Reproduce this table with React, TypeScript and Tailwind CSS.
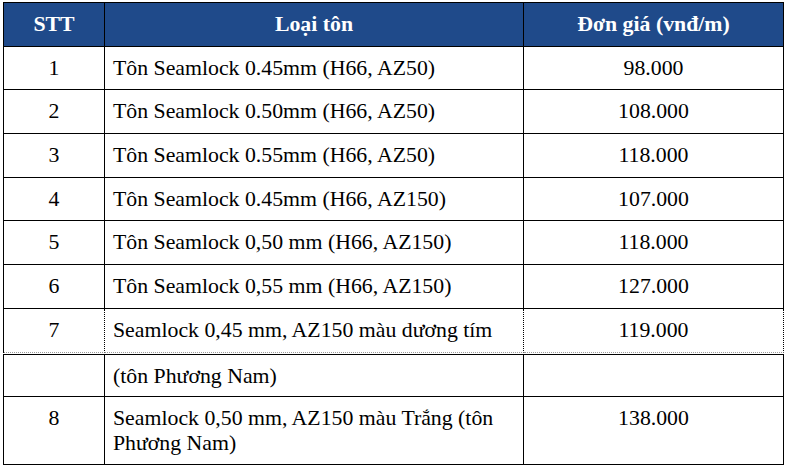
const rows = [
  { stt: '1', name: 'Tôn Seamlock 0.45mm (H66, AZ50)', price: '98.000', h: 'h-[43px]' },
  { stt: '2', name: 'Tôn Seamlock 0.50mm (H66, AZ50)', price: '108.000', h: 'h-[44px]' },
  { stt: '3', name: 'Tôn Seamlock 0.55mm (H66, AZ50)', price: '118.000', h: 'h-[44px]' },
  { stt: '4', name: 'Tôn Seamlock 0.45mm (H66, AZ150)', price: '107.000', h: 'h-[43px]' },
  { stt: '5', name: 'Tôn Seamlock 0,50 mm (H66, AZ150)', price: '118.000', h: 'h-[44px]' },
  { stt: '6', name: 'Tôn Seamlock 0,55 mm (H66, AZ150)', price: '127.000', h: 'h-[44px]' },
];

function Row({ stt, name, price, h, last }: { stt: string; name: string; price: string; h: string; last?: boolean }) {
  // last row of the first page: bottom rule is a dotted grey line
  const b = last ? 'border-b border-dotted border-b-[#9a9a9a]' : 'border-b border-black';
  return (
    <>
      <div className={`${h} ${b} border-r border-r-black pt-[9px] text-center`}>{stt}</div>
      <div className={`${h} ${b} border-r border-r-black pt-[9px] pl-[8px] pr-[6px]`}>{name}</div>
      <div className={`${h} ${b} border-r border-r-black pt-[9px] text-center`}>{price}</div>
    </>
  );
}

export default function App() {
  return (
    <div className="min-h-screen bg-white pt-[2px] pl-[3px] font-['Liberation_Serif','Times_New_Roman',serif] text-[21.8px] leading-[25px] text-black">
      <div className="grid w-[781px] grid-cols-[101px_419px_260px] border-l border-t border-black">
        <div className="flex h-[44px] items-center justify-center border-b border-r border-black bg-[#1f4a8a] font-bold text-white">
          STT
        </div>
        <div className="flex h-[44px] items-center justify-center border-b border-r border-black bg-[#1f4a8a] font-bold text-white">
          Loại tôn
        </div>
        <div className="flex h-[44px] items-center justify-center border-b border-r border-black bg-[#1f4a8a] font-bold text-white">
          Đơn giá (vnđ/m)
        </div>

        {rows.map((r) => (
          <Row key={r.stt} {...r} />
        ))}
        <Row stt="7" name="Seamlock 0,45 mm, AZ150 màu dương tím" price="119.000" h="h-[44px]" last />
      </div>

      <div className="mt-[1px] grid w-[781px] grid-cols-[101px_419px_260px] border-l border-t border-black">
        <Row stt="" name="(tôn Phương Nam)" price="" h="h-[42px]" />
        <Row stt="8" name="Seamlock 0,50 mm, AZ150 màu Trắng (tôn Phương Nam)" price="138.000" h="h-[68px]" />
      </div>
    </div>
  );
}
